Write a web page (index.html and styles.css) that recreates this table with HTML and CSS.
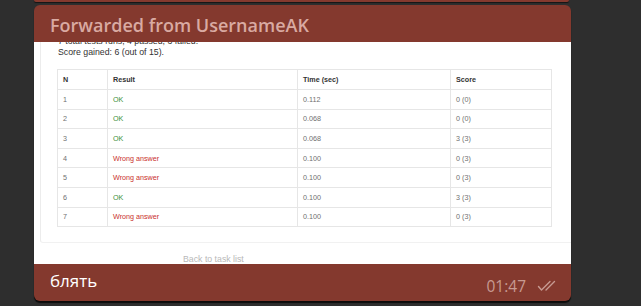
FILE: index.html
```html
<!DOCTYPE html>
<html>
<head>
<meta charset="utf-8">
<link rel="stylesheet" href="styles.css">
</head>
<body>
<div class="prev"></div>
<div class="bubble">
  <div class="fwd">Forwarded from UsernameAK</div>
  <div class="media">
    <div class="panel">
      <div class="summary">
        <div>7 total tests runs, 4 passed, 3 failed.</div>
        <div>Score gained: 6 (out of 15).</div>
      </div>
      <table class="tests">
        <colgroup><col class="c1"><col class="c2"><col class="c3"><col class="c4"></colgroup>
        <thead>
          <tr><th>N</th><th>Result</th><th>Time (sec)</th><th>Score</th></tr>
        </thead>
        <tbody>
          <tr><td>1</td><td class="ok">OK</td><td>0.112</td><td>0 (0)</td></tr>
          <tr><td>2</td><td class="ok">OK</td><td>0.068</td><td>0 (0)</td></tr>
          <tr><td>3</td><td class="ok">OK</td><td>0.068</td><td>3 (3)</td></tr>
          <tr><td>4</td><td class="wa">Wrong answer</td><td>0.100</td><td>0 (3)</td></tr>
          <tr><td>5</td><td class="wa">Wrong answer</td><td>0.100</td><td>0 (3)</td></tr>
          <tr><td>6</td><td class="ok">OK</td><td>0.100</td><td>3 (3)</td></tr>
          <tr><td>7</td><td class="wa">Wrong answer</td><td>0.100</td><td>0 (3)</td></tr>
        </tbody>
      </table>
    </div>
    <div class="footer-link">Back to task list</div>
  </div>
  <div class="caption">
    <span class="text">блять</span>
    <span class="meta">
      <span class="time">01:47</span>
      <svg class="checks" width="24" height="12" viewBox="0 0 24 12">
        <path d="M1.5 6.5 L4.5 10 L13 1.5" fill="none" stroke="#c79a92" stroke-width="1.4" stroke-linecap="round" stroke-linejoin="round"/>
        <path d="M9 10 L17.5 1.5" fill="none" stroke="#c79a92" stroke-width="1.4" stroke-linecap="round"/>
      </svg>
    </span>
  </div>
</div>
</body>
</html>
```

FILE: styles.css
```css
html, body {
  margin: 0;
  padding: 0;
}
body {
  background: #2e2e2e;
  width: 641px;
  height: 306px;
  overflow: hidden;
  font-family: "Open Sans", "Noto Sans", sans-serif;
}
.prev {
  margin-left: 34px;
  width: 535px;
  height: 2px;
  background: #84392e;
  border-radius: 0 0 5px 5px;
  box-shadow: 0 1px 1px #141414;
}
.bubble {
  margin-top: 3px;
  margin-left: 34px;
  width: 537px;
  border-radius: 6px;
  overflow: hidden;
  background: #84392e;
  box-shadow: 0 2px 1px rgba(0, 0, 0, 0.75);
}
.fwd {
  height: 37px;
  box-sizing: border-box;
  padding: 8px 0 0 16px;
  font-size: 18px;
  font-weight: 600;
  line-height: 24px;
  color: #d9aaa2;
  white-space: nowrap;
}
.media {
  height: 222px;
  background: #fff;
  overflow: hidden;
}
.panel {
  margin-left: 6px;
  height: 207px;
  box-sizing: border-box;
  border-left: 1px solid #ececec;
  border-bottom: 1px solid #f1f1f1;
  border-bottom-left-radius: 3px;
  padding-left: 16px;
}
.summary {
  margin-top: -6px;
  margin-left: 1px;
  font-family: "Liberation Sans", Arial, sans-serif;
  font-size: 8.75px;
  line-height: 10.5px;
  color: #333;
}
.tests {
  margin-top: 12px;
  border-collapse: collapse;
  width: 494px;
  table-layout: fixed;
  font-family: "Liberation Sans", Arial, sans-serif;
  font-size: 7.2px;
}
.c1 { width: 50px; }
.c2 { width: 190px; }
.c3 { width: 153px; }
.c4 { width: 101px; }
.tests th, .tests td {
  border: 1px solid #e6e6e6;
  height: 18.6px;
  padding: 0 5px;
  text-align: left;
  vertical-align: middle;
}
.tests th {
  color: #333;
  font-weight: bold;
  height: 19px;
}
.tests td {
  color: #707070;
}
.tests td.ok { color: #3a8f3a; }
.tests td.wa { color: #c9302c; }
.footer-link {
  margin: 11px 0 0 149px;
  font-family: "Liberation Sans", Arial, sans-serif;
  font-size: 8.75px;
  color: #b8b8b8;
}
.caption {
  height: 37px;
  box-sizing: border-box;
  display: flex;
  align-items: flex-start;
  justify-content: space-between;
  padding: 5px 10px 0 16px;
}
.caption .text {
  font-size: 17px;
  line-height: 24px;
  color: #fff;
}
.meta {
  display: flex;
  align-items: center;
  gap: 11px;
  margin-top: 7px;
}
.time {
  font-size: 15.5px;
  line-height: 20px;
  color: #c79a92;
}
.checks {
  display: block;
}
```
